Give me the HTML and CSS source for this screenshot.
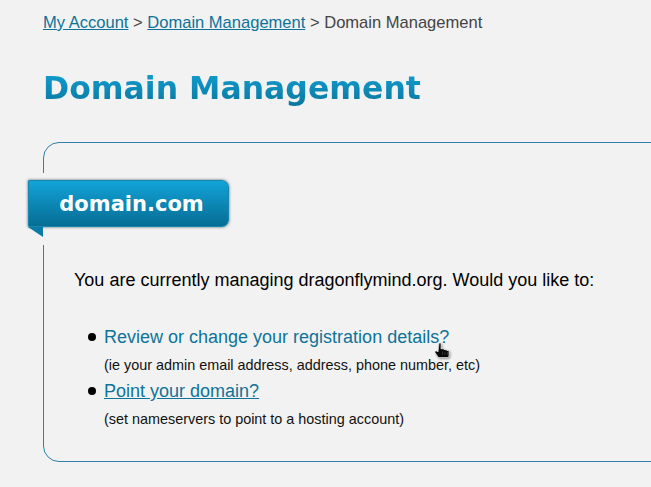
FILE: index.html
```html
<!DOCTYPE html>
<html lang="en">
<head>
<meta charset="utf-8">
<title>Domain Management</title>
<link rel="stylesheet" href="styles.css">
</head>
<body>
<div class="page">
  <nav class="crumbs"><a href="#">My Account</a> &gt; <a href="#">Domain Management</a> &gt; Domain Management</nav>
  <h1 class="title"><span>Domain Management</span></h1>
  <section class="card">
    <div class="ribbon">
      <div class="ribbon-body">domain.com</div>
      <svg class="ribbon-tail" width="15" height="10" viewBox="0 0 15 10"><path d="M0 0H15V10Z" fill="#0a7ba6"/></svg>
    </div>
    <p class="intro">You are currently managing dragonflymind.org. Would you like to:</p>
    <ul class="options">
      <li><a class="plain" href="#">Review or change your registration details?</a><small>(ie your admin email address, address, phone number, etc)</small></li>
      <li><a href="#">Point your domain?</a><small>(set nameservers to point to a hosting account)</small></li>
    </ul>
  </section>
</div>
<svg class="cursor" width="18" height="18" viewBox="0 0 18 18">
  <path d="M4 1h2v6l1-.5 .5 .5h1l.5 .5h1l.5 .5h1l.5 .5h2v5.500l-1 1.500h-9.500l-1.500-2-2-3v-1.500h2l1 1z" fill="#0a0a0a" stroke="#fff" stroke-width=".6"/>
  <path d="M7.500 9.500v3.500M10 9.500v3.500M12.500 10v3" stroke="#555" stroke-width=".5" fill="none"/>
</svg>
</body>
</html>
```
FILE: styles.css
```css
html, body {
  margin: 0;
  height: 100%;
  overflow: hidden;
  background: #f2f2f2;
}
body {
  font-family: "Liberation Sans", Arial, sans-serif;
  position: relative;
}
.page {
  padding: 12px 0 0 43px;
  width: 700px;
  box-sizing: content-box;
}
a {
  color: #0e7399;
}
a.plain {
  text-decoration: none;
}
.crumbs {
  font-size: 16.540px;
  line-height: 21px;
  color: #444;
}
.title {
  margin: 30px 0 0;
  font-family: "DejaVu Sans", sans-serif;
  font-size: 31.500px;
  line-height: 50px;
  font-weight: 700;
}
.title span {
  background: linear-gradient(#12a0d3, #0a779f);
  -webkit-background-clip: text;
  background-clip: text;
  color: transparent;
}
.card {
  margin-top: 29px;
  height: 281px;
  border: 1px solid #2f81aa;
  border-radius: 16px;
  box-sizing: content-box;
  padding-top: 37px;
  position: relative;
}
.ribbon {
  margin-left: -16px;
  width: 201px;
  height: 47px;
  position: relative;
}
.ribbon::before {
  content: "";
  position: absolute;
  left: 14px;
  top: -7px;
  width: 4px;
  height: 72px;
  background: #f2f2f2;
}
.ribbon-body {
  position: relative;
  box-sizing: border-box;
  height: 47px;
  width: 201px;
  padding-left: 6px;
  border: 1px solid #1a86ad;
  border-radius: 0 7px 7px 0;
  background: linear-gradient(#12a3d8, #066d94);
  box-shadow: 0 0 3px rgba(0, 40, 60, .7);
  color: #fff;
  font-family: "DejaVu Sans", sans-serif;
  font-weight: 700;
  font-size: 21px;
  line-height: 47px;
  text-align: center;
}
.ribbon-tail {
  position: absolute;
  left: 0;
  top: 47px;
}
.intro {
  margin: 42px 0 0 30px;
  font-size: 18px;
  line-height: 22px;
  color: #000;
}
.options {
  margin: 35px 0 0;
  padding: 0 0 0 60px;
  font-size: 18px;
  list-style: none;
}
.options li {
  line-height: 22px;
  height: 54px;
  position: relative;
}
.options li::before {
  content: "";
  position: absolute;
  left: -16px;
  top: 7px;
  width: 8px;
  height: 8px;
  border-radius: 50%;
  background: #000;
}
.options small {
  display: block;
  margin-top: 8px;
  font-size: 14.400px;
  line-height: 18px;
  color: #111;
}
.cursor {
  position: absolute;
  left: 435px;
  top: 342px;
  filter: drop-shadow(1px 1px 1px rgba(0, 0, 0, .4));
}
```
